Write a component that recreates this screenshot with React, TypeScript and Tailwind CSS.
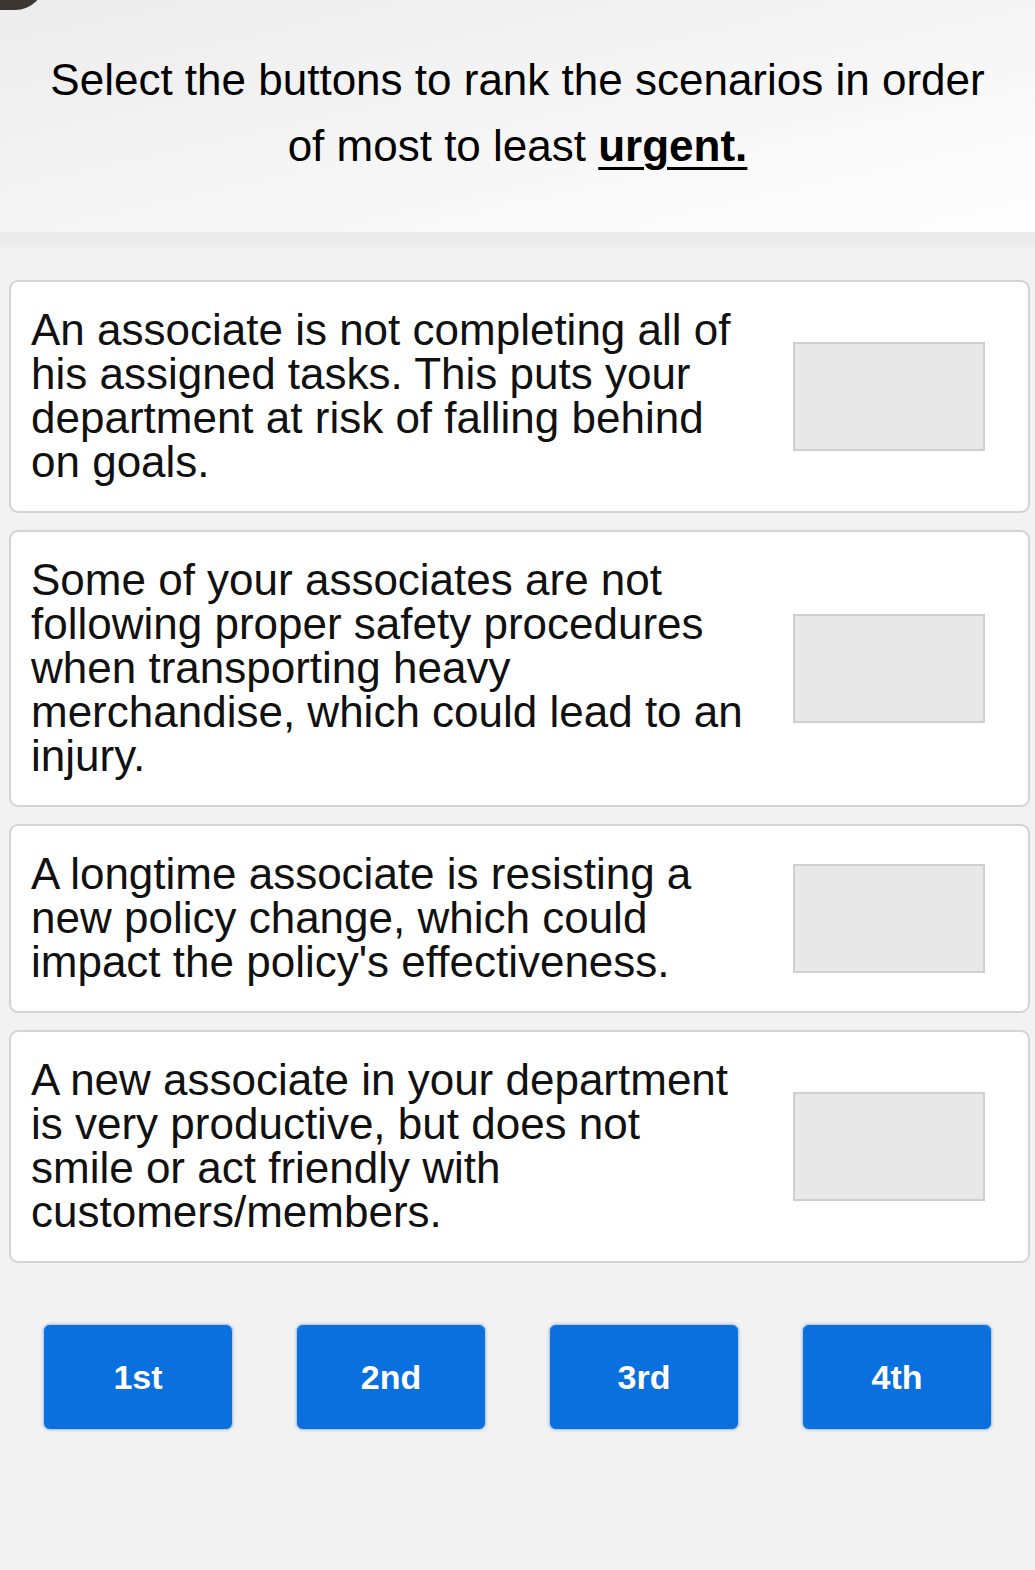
import React from "react";

const scenarios = [
    "An associate is not completing all of his assigned tasks. This puts your department at risk of falling behind on goals.",
    "Some of your associates are not following proper safety procedures when transporting heavy merchandise, which could lead to an injury.",
    "A longtime associate is resisting a new policy change, which could impact the policy's effectiveness.",
    "A new associate in your department is very productive, but does not smile or act friendly with customers/members.",
];

const ranks = ["1st", "2nd", "3rd", "4th"];

export default function App() {
    return (
        <main
            className="relative min-h-[1570px] w-full overflow-hidden bg-[#f2f2f2] text-black"
            style={{ fontFamily: '"Liberation Sans", Arial, sans-serif' }}
        >
            {/* corner of the device bezel */}
            <div className="absolute -left-[45px] -top-[50px] h-[60px] w-[90px] rounded-full bg-[#3b3631]" />

            {/* Prompt */}
            <header className="bg-gradient-to-br from-[#ececec] to-[#fefefe] px-4 pb-[53px] pt-[47px] text-center text-[44px] leading-[66px]">
                <p>Select the buttons to rank the scenarios in order</p>
                <p>
                    of most to least{" "}
                    <span className="font-bold underline decoration-[3px] underline-offset-[6px]">urgent.</span>
                </p>
            </header>
            <div className="h-[12px] bg-[#ebebeb] shadow-[0_2px_4px_rgba(0,0,0,0.04)]" />

            {/* Scenario cards */}
            <section className="flex flex-col gap-[17px] pl-[9px] pr-[5px] pt-[36px]">
                {scenarios.map((text, i) => (
                    <div
                        key={i}
                        className="flex items-center justify-between rounded-[9px] border-2 border-[#d3d3d3] bg-white pb-[27px] pl-[20px] pr-[43px] pt-[26px]"
                    >
                        <p className="w-[716px] text-[44px] leading-[44px] text-[#111]">{text}</p>
                        <div className="h-[109px] w-[192px] shrink-0 border-2 border-[#cfcfcf] bg-[#e8e8e8]" />
                    </div>
                ))}
            </section>

            {/* Rank buttons */}
            <section className="flex justify-between px-[43px] pt-[61px]">
                {ranks.map((r) => (
                    <button
                        key={r}
                        className="flex h-[106px] w-[190px] items-center justify-center rounded-[7px] border border-[#b9cde4] bg-[#0a70dd] text-[34px] font-bold text-white shadow-[0_0_3px_rgba(90,130,180,0.45)]"
                    >
                        {r}
                    </button>
                ))}
            </section>
        </main>
    );
}
